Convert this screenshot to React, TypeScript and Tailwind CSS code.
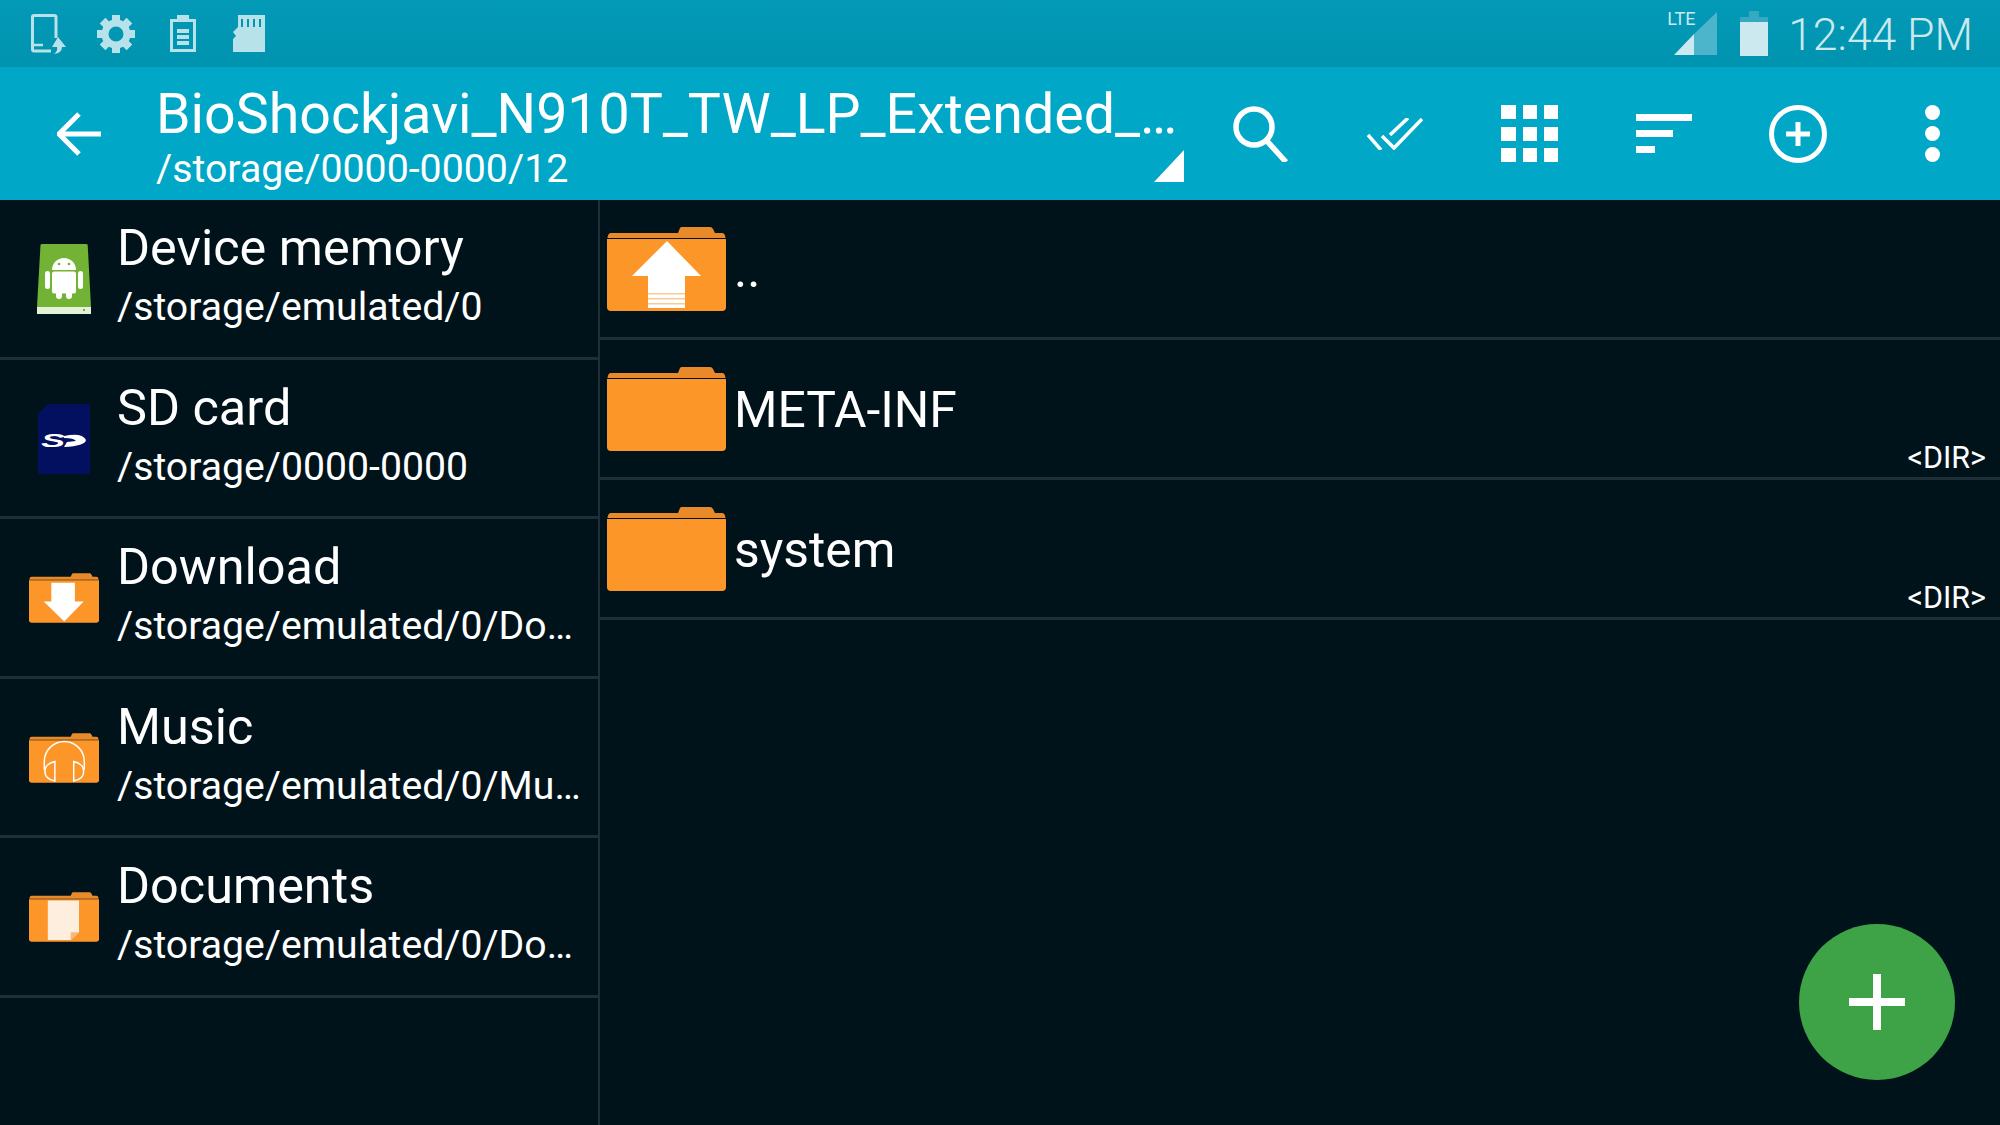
import type { ReactNode } from "react";

const drawerItems = [
  { name: "Device memory", path: "/storage/emulated/0", icon: "device" },
  { name: "SD card", path: "/storage/0000-0000", icon: "sd" },
  { name: "Download", path: "/storage/emulated/0/Do…", icon: "download" },
  { name: "Music", path: "/storage/emulated/0/Mu…", icon: "music" },
  { name: "Documents", path: "/storage/emulated/0/Do…", icon: "documents" },
];

function Folder({ className, children }: { className: string; children?: ReactNode }) {
  return (
    <svg viewBox="0 0 119 84" className={className}>
      <path d="M71 6 L73 1 Q73.500 0 75 0 L103 0 Q105 0 106 2 L108 6 L115 6 Q118 6 118.500 11 L0.500 11 Q1 6 4 6 Z" fill="#e98a2a" />
      <path d="M0 12 L119 12 L119 80 Q119 84 115 84 L4 84 Q0 84 0 80 Z" fill="#fd9629" />
      {children}
    </svg>
  );
}

function DrawerIcon({ type }: { type: string }) {
  if (type === "device") {
    return (
      <svg viewBox="0 0 54 70" className="h-[70px] w-[54px]">
        <path d="M3.500 1 Q3.700 0 5 0 L49 0 Q50.500 0 50.700 1 L54 63 L0 63 Z" fill="#72b234" />
        <rect x="0" y="63" width="54" height="7" fill="#e5f0d8" />
        <rect x="46" y="65" width="2" height="2" fill="#72b234" />
        <g fill="#fff">
          <path d="M15 26 A12 12 0 0 1 39 26 Z" />
          <rect x="15" y="27.500" width="24" height="22" rx="2" />
          <rect x="8" y="27" width="5" height="18" rx="2.500" />
          <rect x="41" y="27" width="5" height="18" rx="2.500" />
          <rect x="19" y="45" width="6" height="10" rx="3" />
          <rect x="29" y="45" width="6" height="10" rx="3" />
        </g>
        <circle cx="22" cy="20" r="1.300" fill="#72b234" />
        <circle cx="32" cy="20" r="1.300" fill="#72b234" />
      </svg>
    );
  }
  if (type === "sd") {
    return (
      <svg viewBox="0 0 52 70" className="h-[70px] w-[52px]">
        <path d="M10 0 L52 0 L52 70 L0 70 L0 10 Z" fill="#03105f" />
        <text x="3" y="43" fontFamily="Liberation Sans" fontStyle="italic" fontWeight="700" fontSize="18" fill="#fff" textLength="24" lengthAdjust="spacingAndGlyphs">S</text>
        <path d="M26 32 Q44 28 48 36 Q47 42 26 43 L29 38 L38 37 Q36 34 26 34 Z" fill="#fff" />
      </svg>
    );
  }
  if (type === "download") {
    return (
      <Folder className="h-[50px] w-[70px]">
        <path d="M38 16 L78 16 L78 48 L93 48 L60 82 L25 48 L38 48 Z" fill="#fff" />
      </Folder>
    );
  }
  if (type === "music") {
    return (
      <Folder className="h-[50px] w-[70px]">
        <g fill="none" stroke="#fff" strokeWidth="2.500">
          <path d="M26 62 L26 48 A34 34 0 0 1 94 48 L94 62" />
          <path d="M44 48 L44 81 Q27 78 27 65 Q27 52 44 48 Z" />
          <path d="M76 48 L76 81 Q93 78 93 65 Q93 52 76 48 Z" />
        </g>
      </Folder>
    );
  }
  return (
    <Folder className="h-[50px] w-[70px]">
      <path d="M32 14 L85 14 L85 68 L71 81 L32 81 Z" fill="#fdeede" />
      <path d="M85 68 L71 81 L71 68 Z" fill="#f7b877" />
    </Folder>
  );
}

function StatusIcons() {
  return (
    <div className="flex items-center pl-[31px] text-[#b8e2ea]">
      <svg viewBox="0 0 35 40" className="h-[40px] w-[35px]">
        <path d="M20 37 L3 37 Q1.500 37 1.500 35 L1.500 3 Q1.500 1.500 3 1.500 L23 1.500 Q25 1.500 25 3 L25 24" fill="none" stroke="currentColor" strokeWidth="3" />
        <path d="M3 31 L12 31" stroke="currentColor" strokeWidth="2.500" />
        <path d="M27 23 L35 33 L31 33 Q31 39 23 40 Q27 37 26 33 L21 33 Z" fill="currentColor" />
      </svg>
      <svg viewBox="0 0 38 38" className="ml-[31px] h-[38px] w-[38px]">
        <g fill="currentColor">
          <rect x="15" y="0" width="8" height="8" />
          <rect x="15" y="0" width="8" height="8" transform="rotate(45 19 19)" />
          <rect x="15" y="0" width="8" height="8" transform="rotate(90 19 19)" />
          <rect x="15" y="0" width="8" height="8" transform="rotate(135 19 19)" />
          <rect x="15" y="0" width="8" height="8" transform="rotate(180 19 19)" />
          <rect x="15" y="0" width="8" height="8" transform="rotate(225 19 19)" />
          <rect x="15" y="0" width="8" height="8" transform="rotate(270 19 19)" />
          <rect x="15" y="0" width="8" height="8" transform="rotate(315 19 19)" />
        </g>
        <circle cx="19" cy="19" r="11" fill="none" stroke="currentColor" strokeWidth="7" />
      </svg>
      <svg viewBox="0 0 26 37" className="ml-[35px] h-[37px] w-[26px]">
        <path d="M7 0 L19 0 L19 4 L26 4 L26 37 L0 37 L0 4 L7 4 Z" fill="currentColor" />
        <rect x="3" y="7" width="20" height="27" fill="#0096b3" />
        <rect x="7" y="14" width="12" height="4" fill="currentColor" />
        <rect x="7" y="20" width="12" height="4" fill="currentColor" />
        <rect x="7" y="26" width="12" height="4" fill="currentColor" />
      </svg>
      <svg viewBox="0 0 32 37" className="ml-[37px] h-[37px] w-[32px]">
        <path d="M5 0 L32 0 L32 37 L0 37 L0 24 L3 21 L0 17 L5 12 Z" fill="currentColor" />
        <g fill="#0096b3">
          <rect x="8" y="4" width="2" height="8" />
          <rect x="14" y="4" width="2" height="8" />
          <rect x="20" y="4" width="2" height="8" />
          <rect x="26" y="4" width="2" height="8" />
        </g>
      </svg>
    </div>
  );
}

function ToolbarIcon({ children }: { children: ReactNode }) {
  return <div className="flex w-[134.4px] items-center justify-center">{children}</div>;
}

function FileRow({ name, dir, up }: { name: string; dir?: boolean; up?: boolean }) {
  return (
    <div className="flex h-[140px] items-center border-b-[3px] border-[#1e2f37] pl-[7px]">
      <div className="mt-[1px] flex">
        <Folder className="h-[84px] w-[119px]">
          {up && (
            <g>
              <path d="M60 14 L94 49 L78 49 L78 81 L41 81 L41 49 L25 49 Z" fill="#fff" />
              <g fill="#fd9629" opacity="0.5">
                <rect x="41" y="66" width="37" height="1.500" />
                <rect x="41" y="71" width="37" height="1.500" />
                <rect x="41" y="76" width="37" height="1.500" />
              </g>
            </g>
          )}
        </Folder>
      </div>
      <div className="ml-[8px] mt-[2px] text-[49.8px] leading-[60px]">{name}</div>
      {dir && <div className="mb-[1px] ml-auto mr-[14px] self-end text-[30.5px] leading-[36px]">&lt;DIR&gt;</div>}
    </div>
  );
}

export default function App() {
  return (
    <div className="relative flex h-[1125px] w-[2000px] flex-col overflow-hidden bg-[#00131b] font-['Roboto',sans-serif] text-white">
      <div className="flex h-[67px] items-center justify-between bg-gradient-to-b from-[#039ab7] to-[#0093af]">
        <StatusIcons />
        <div className="flex items-center pr-[27px] text-[#cbe9ee]">
          <div className="relative h-[43px] w-[43px]">
            <svg viewBox="0 0 43 43" className="h-[43px] w-[43px]">
              <path d="M43 0 L43 43 L20 43 L20 22 Z" fill="#4db5cb" />
              <path d="M20 22 L20 43 L0 43 Z" fill="#cbe9ee" />
            </svg>
            <span className="absolute left-[-7px] top-[-2px] text-[18px] leading-[18px]">LTE</span>
          </div>
          <svg viewBox="0 0 28 45" className="ml-[23px] h-[45px] w-[28px]">
            <rect x="9" y="0" width="10" height="6" fill="#35a9c1" />
            <rect x="0" y="6" width="28" height="5" fill="#35a9c1" />
            <rect x="0" y="11" width="28" height="34" fill="#cbe9ee" />
          </svg>
          <span className="ml-[20px] mt-[3px] text-[44.5px] leading-[64px] font-light">12:44 PM</span>
        </div>
      </div>

      <div className="flex h-[133px] items-stretch bg-[#00a7c7]">
        <div className="flex w-[156px] items-center pl-[57px]">
          <svg viewBox="0 0 44 44" className="h-[44px] w-[44px]">
            <path d="M22 2 L2 22 L22 42 M2 22 L44 22" fill="none" stroke="#fff" strokeWidth="5" />
          </svg>
        </div>
        <div className="relative w-[1038px]">
          <div className="mt-[18px] text-[55.5px] leading-[60px] whitespace-nowrap">BioShockjavi_N910T_TW_LP_Extended_…</div>
          <div className="mt-[2px] text-[39.3px] leading-[44px] whitespace-nowrap">/storage/0000-0000/12</div>
          <svg viewBox="0 0 30 32" className="absolute bottom-[18px] right-[10px] h-[32px] w-[30px]">
            <path d="M30 0 L30 32 L0 32 Z" fill="#fff" />
          </svg>
        </div>
        <ToolbarIcon>
          <svg viewBox="0 0 56 56" className="h-[56px] w-[56px]">
            <circle cx="21" cy="21" r="18" fill="none" stroke="#fff" strokeWidth="5.500" />
            <path d="M33 34 L53 56" stroke="#fff" strokeWidth="5.500" />
          </svg>
        </ToolbarIcon>
        <ToolbarIcon>
          <svg viewBox="0 0 56 32" className="h-[32px] w-[56px]">
            <g fill="none" stroke="#fff" strokeWidth="3.500">
              <path d="M1 17 L14 32" />
              <path d="M15 18 L27 30 L55 1" />
              <path d="M23 17 L41 0" />
            </g>
          </svg>
        </ToolbarIcon>
        <ToolbarIcon>
          <div className="grid grid-cols-3 gap-x-[7px] gap-y-[7.500px]">
            {Array.from({ length: 9 }).map((_, i) => (
              <div key={i} className="h-[14px] w-[14.300px] bg-white" />
            ))}
          </div>
        </ToolbarIcon>
        <ToolbarIcon>
          <div className="flex w-[56px] flex-col gap-[9px]">
            <div className="h-[7px] w-[56px] bg-white" />
            <div className="h-[7px] w-[37px] bg-white" />
            <div className="h-[7px] w-[19px] bg-white" />
          </div>
        </ToolbarIcon>
        <ToolbarIcon>
          <svg viewBox="0 0 58 58" className="h-[58px] w-[58px]">
            <circle cx="29" cy="29" r="26.500" fill="none" stroke="#fff" strokeWidth="5" />
            <path d="M29 17 L29 41 M17 29 L41 29" stroke="#fff" strokeWidth="5" />
          </svg>
        </ToolbarIcon>
        <ToolbarIcon>
          <div className="flex flex-col gap-[6px]">
            <div className="h-[15px] w-[15px] rounded-full bg-white" />
            <div className="h-[15px] w-[15px] rounded-full bg-white" />
            <div className="h-[15px] w-[15px] rounded-full bg-white" />
          </div>
        </ToolbarIcon>
      </div>

      <div className="flex flex-1">
        <div className="w-[600px] shrink-0 border-r-[2px] border-[#1e2f37]">
          {drawerItems.map((item) => (
            <div key={item.name} className="flex h-[159.500px] border-b-[3px] border-[#1e2f37]">
              <div className="flex w-[117px] items-center justify-center pl-[11px] pt-[2px]">
                <DrawerIcon type={item.icon} />
              </div>
              <div className="flex flex-col pt-[18px]">
                <div className="text-[50.4px] leading-[60px]">{item.name}</div>
                <div className="mt-[1px] text-[39.2px] leading-[56px] whitespace-nowrap">{item.path}</div>
              </div>
            </div>
          ))}
        </div>
        <div className="flex-1">
          <FileRow name=".." up />
          <FileRow name="META-INF" dir />
          <FileRow name="system" dir />
        </div>
      </div>

      <div className="absolute left-[1799px] top-[924px] flex h-[156px] w-[156px] items-center justify-center rounded-full bg-[#3ea346]">
        <svg viewBox="0 0 56 56" className="h-[56px] w-[56px]">
          <path d="M28 0 L28 56 M0 28 L56 28" stroke="#fff" strokeWidth="8" />
        </svg>
      </div>
    </div>
  );
}
